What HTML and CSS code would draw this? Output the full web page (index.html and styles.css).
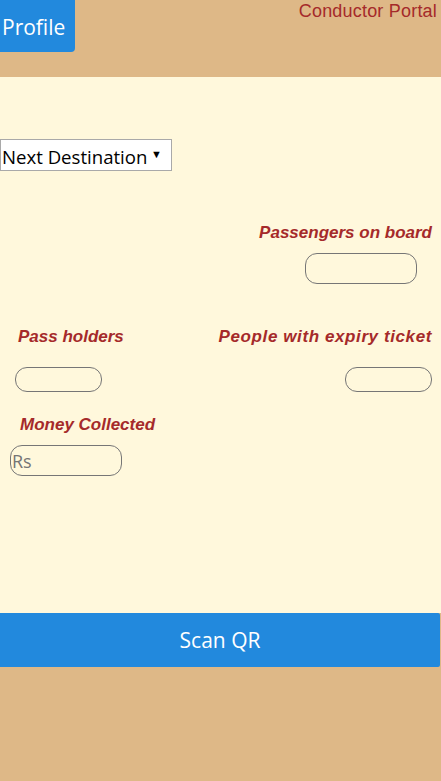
FILE: index.html
```html
<!DOCTYPE html>
<html lang="en">
<head>
<meta charset="utf-8">
<title>Conductor Portal</title>
<link rel="stylesheet" href="styles.css">
</head>
<body>
<header class="topbar">
  <button class="profile-btn">Profile</button>
  <div class="portal-title">Conductor Portal</div>
</header>
<main class="panel">
  <div class="select-box">
    <span class="select-text">Next Destination</span>
    <span class="select-arrow">&#9660;</span>
  </div>
  <section class="board-row">
    <div class="label">Passengers on board</div>
    <div class="field field-board"></div>
  </section>
  <section class="pair-row">
    <div class="pair-col">
      <div class="label label-pass">Pass holders</div>
      <div class="field field-small field-left"></div>
    </div>
    <div class="pair-col pair-col-right">
      <div class="label label-expiry">People with expiry ticket</div>
      <div class="field field-small"></div>
    </div>
  </section>
  <section class="money-row">
    <div class="label label-money">Money Collected</div>
    <div class="field field-money"><span class="placeholder">Rs</span></div>
  </section>
</main>
<button class="scan-btn">Scan QR</button>
<footer class="bottom"></footer>
</body>
</html>
```
FILE: styles.css
```css
html, body {
  margin: 0;
  padding: 0;
}
body {
  width: 441px;
  height: 781px;
  background: #deb887;
  font-family: "Open Sans", "Noto Sans", sans-serif;
  overflow: hidden;
}
.topbar {
  height: 77px;
  display: flex;
  justify-content: space-between;
  align-items: flex-start;
  background: #deb887;
}
.profile-btn {
  width: 75px;
  height: 52px;
  margin: 0;
  padding: 2px 0 0 2px;
  border: none;
  border-radius: 0 0 4px 0;
  background: #2289dd;
  color: #fff;
  font-family: "Open Sans", sans-serif;
  font-size: 21px;
  text-align: left;
}
.portal-title {
  color: #a52a2a;
  font-family: "Liberation Sans", sans-serif;
  font-size: 18px;
  letter-spacing: 0.2px;
  padding-top: 1px;
  padding-right: 4px;
}
.panel {
  height: 536px;
  background: #fff8dc;
  display: flex;
  flex-direction: column;
  box-sizing: border-box;
  padding-top: 62px;
}
.select-box {
  width: 172px;
  height: 32px;
  box-sizing: border-box;
  border: 1px solid #a9a9a9;
  background: #fff;
  display: flex;
  align-items: center;
  padding: 3px 0 0 1px;
  color: #000;
  font-size: 18.6px;
}
.select-text {
  flex: 1;
}
.select-arrow {
  flex: none;
  font-size: 11px;
  margin-right: 9px;
  margin-bottom: 6px;
}
.label {
  color: #a52a2a;
  font-family: "Liberation Sans", sans-serif;
  font-weight: bold;
  font-style: italic;
  font-size: 17px;
  line-height: 20px;
}
.label-expiry {
  letter-spacing: 0.6px;
}
.field {
  box-sizing: border-box;
  border: 1px solid #767676;
  border-radius: 12px;
  background: transparent;
}
.board-row {
  margin-top: 52px;
  display: flex;
  flex-direction: column;
  align-items: flex-end;
  padding-right: 9px;
}
.field-board {
  width: 112px;
  height: 31px;
  margin-top: 10px;
  margin-right: 15px;
}
.pair-row {
  margin-top: 43px;
  display: flex;
  justify-content: space-between;
  padding-right: 9px;
}
.pair-col {
  display: flex;
  flex-direction: column;
}
.pair-col-right {
  align-items: flex-end;
}
.label-pass {
  margin-left: 18px;
}
.field-small {
  width: 87px;
  height: 25px;
  margin-top: 20px;
}
.field-left {
  margin-left: 15px;
}
.money-row {
  margin-top: 23px;
  display: flex;
  flex-direction: column;
}
.label-money {
  margin-left: 20px;
}
.field-money {
  width: 112px;
  height: 31px;
  margin-top: 10px;
  margin-left: 10px;
  display: flex;
  align-items: center;
  padding-left: 1px;
}
.placeholder {
  color: #757575;
  font-family: "Open Sans", sans-serif;
  font-size: 18px;
}
.scan-btn {
  display: block;
  width: 440px;
  height: 54px;
  margin: 0;
  padding: 0;
  border: none;
  border-radius: 0 2px 2px 0;
  background: #2289dd;
  color: #fff;
  font-family: "Open Sans", sans-serif;
  font-size: 21px;
  text-align: center;
}
.bottom {
  height: 114px;
}
```
